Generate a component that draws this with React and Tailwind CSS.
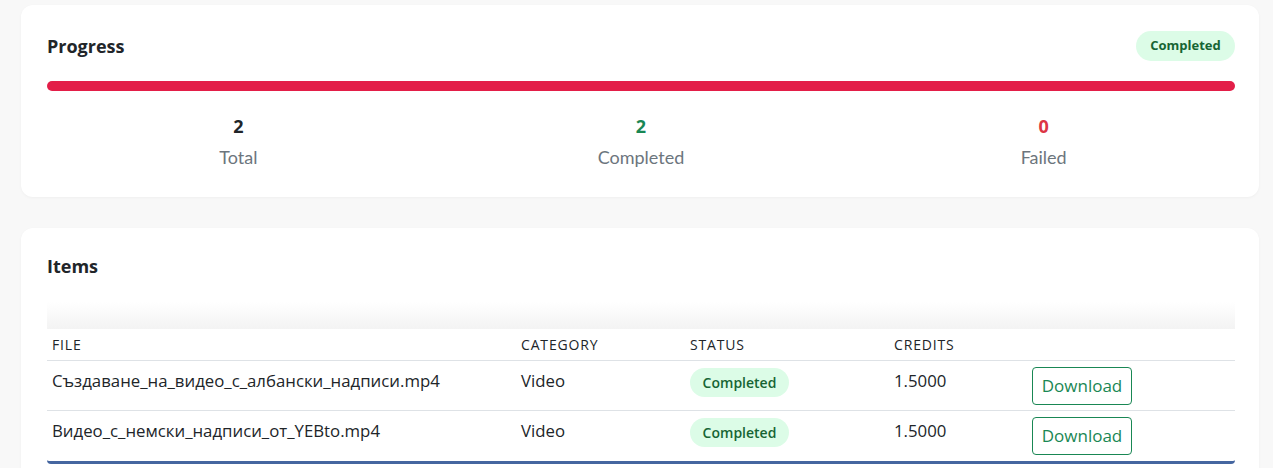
export default function App() {
  const stats = [
    { value: 2, label: "Total", color: "text-[#212529]" },
    { value: 2, label: "Completed", color: "text-[#198754]" },
    { value: 0, label: "Failed", color: "text-[#dc3545]" },
  ];

  const items = [
    { file: "Създаване_на_видео_с_албански_надписи.mp4", category: "Video", credits: "1.5000" },
    { file: "Видео_с_немски_надписи_от_YEBto.mp4", category: "Video", credits: "1.5000" },
  ];

  return (
    <div className="min-h-screen bg-[#f8f8f8] pl-[21px] pr-[14px] pt-[5px] pb-6 font-['Lato',sans-serif] text-[#212529]">
      {/* Progress card */}
      <div className="rounded-[12px] bg-white pl-[26px] pr-[24px] pt-[26px] pb-[28px] shadow-[0_1px_3px_rgba(0,0,0,0.04)]">
        <div className="flex h-[30px] items-center justify-between">
          <h2 className="font-['Open_Sans',sans-serif] text-[18px] font-bold">Progress</h2>
          <span className="flex h-[30px] w-[99px] items-center justify-center rounded-full bg-[#dcfce7] font-['Open_Sans',sans-serif] text-[13px] font-bold text-[#166534]">
            Completed
          </span>
        </div>
        <div className="mt-[20px] h-[10px] w-full rounded-full bg-[#e31e48]"></div>
        <div className="-mx-[10px] mt-[21px] grid grid-cols-3">
          {stats.map((s) => (
            <div key={s.label} className="flex flex-col items-center">
              <div className={`font-['Open_Sans',sans-serif] text-[18px] font-bold leading-[28px] ${s.color}`}>{s.value}</div>
              <div className="mt-[5px] text-[18px] leading-[24px] text-[#6c757d]">{s.label}</div>
            </div>
          ))}
        </div>
      </div>

      {/* Items card */}
      <div className="mt-[31px] rounded-[12px] bg-white pl-[26px] pr-[24px] pt-[24px] pb-[20px] shadow-[0_1px_3px_rgba(0,0,0,0.04)]">
        <h2 className="font-['Open_Sans',sans-serif] text-[18px] font-bold leading-[28px]">Items</h2>
        <div className="mt-[22px] h-[27px] bg-gradient-to-b from-white to-[#f3f3f3]"></div>
        <div className="overflow-hidden rounded-b-[4px] rounded-t-[8px] border-b-[3px] border-[#4566a0] bg-white font-['Open_Sans',sans-serif]">
          <div className="grid h-[32px] grid-cols-[469px_169px_204px_138px_1fr] items-center border-b border-[#dee2e6] text-[14px] uppercase tracking-[0.06em]">
            <div className="px-[5px]">File</div>
            <div className="px-[5px]">Category</div>
            <div className="px-[5px]">Status</div>
            <div className="px-[5px]">Credits</div>
            <div></div>
          </div>
          {items.map((it, i) => (
            <div
              key={it.file}
              className={`grid h-[50px] grid-cols-[469px_169px_204px_138px_1fr] text-[16.8px] ${i === 0 ? "border-b border-[#dee2e6]" : ""}`}
            >
              <div className="px-[5px] pt-[8px] leading-[24px]">{it.file}</div>
              <div className="px-[5px] pt-[8px] leading-[24px]">{it.category}</div>
              <div className="px-[5px] pt-[7px]">
                <span className="inline-flex h-[29px] w-[99px] items-center justify-center rounded-full bg-[#dcfce7] text-[14px] font-semibold text-[#166534]">
                  Completed
                </span>
              </div>
              <div className="px-[5px] pt-[8px] leading-[24px]">{it.credits}</div>
              <div className="px-[5px] pt-[6px]">
                <button className="h-[38px] w-[100px] rounded-[4px] border border-[#198754] text-[17px] text-[#198754]">
                  Download
                </button>
              </div>
            </div>
          ))}
        </div>
      </div>
    </div>
  );
}
